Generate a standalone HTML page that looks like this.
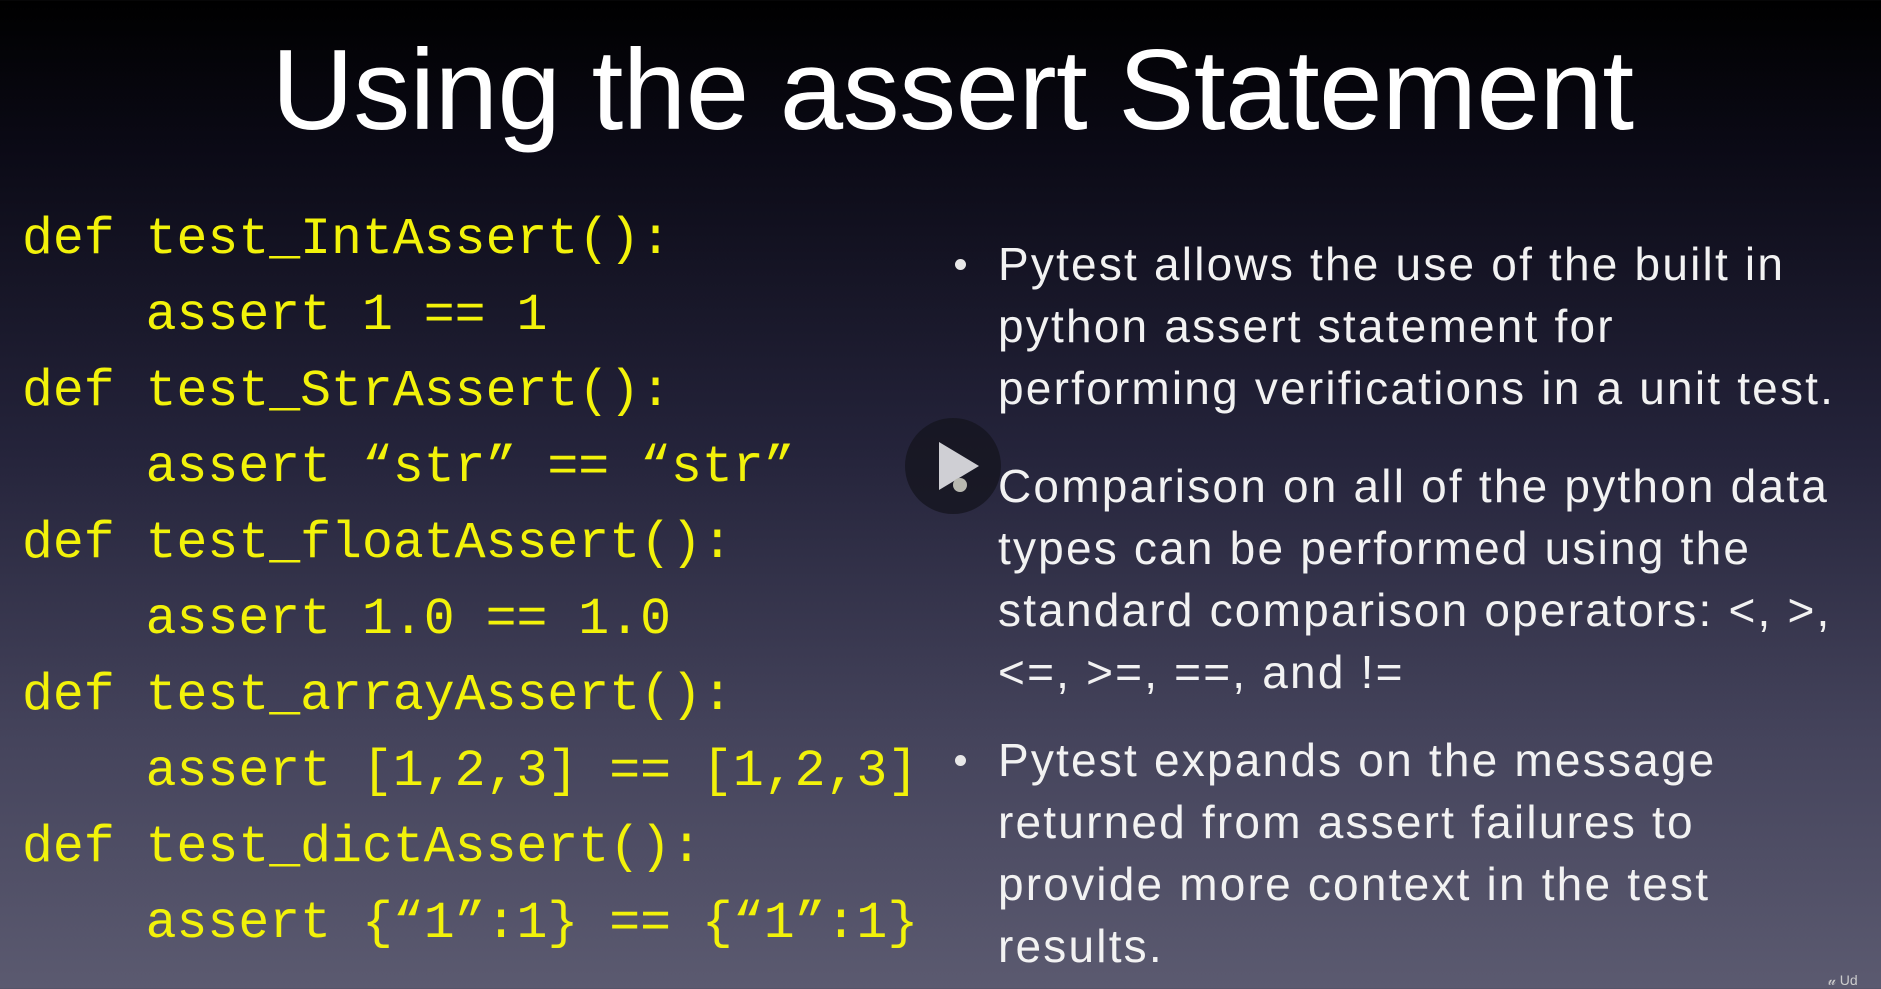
<!DOCTYPE html>
<html><head><meta charset="utf-8"><style>
html,body{margin:0;padding:0}
body{width:1881px;height:989px;overflow:hidden;position:relative;
background:linear-gradient(180deg,#000 0%,#0b0a16 15%,#24233a 45%,#45445c 75%,#5b5a70 100%);
font-family:"Liberation Sans",sans-serif;}
.title{position:absolute;left:0;width:1905px;top:26px;text-align:center;color:#fff;font-size:114px;line-height:130px;letter-spacing:-0.5px}
.code{position:absolute;left:22px;top:202px;font-family:"Liberation Mono","DejaVu Sans Mono",monospace;font-size:51.5px;line-height:76px;color:#f2f20a;white-space:pre;margin:0}
.bul{position:absolute;left:998px;color:#f2f2f2;font-size:46px;line-height:62px;width:900px;letter-spacing:2.2px;white-space:nowrap}
.bul:before{content:"";position:absolute;left:-43px;top:26px;width:11px;height:11px;border-radius:50%;background:#e8e8e8}
.play{position:absolute;left:905px;top:418px;width:96px;height:96px;border-radius:50%;background:rgba(20,20,30,.75)}
.play:after{content:"";position:absolute;left:34px;top:24px;border-left:40px solid #cfcfd4;border-top:24px solid transparent;border-bottom:24px solid transparent}
.dot{position:absolute;left:953px;top:478px;width:14px;height:14px;border-radius:50%;background:#b8b8b0}
.logo{position:absolute;left:1828px;top:972px;color:#ccc;font-size:14px}
</style></head><body>
<div class="title">Using the assert Statement</div>
<pre class="code">def test_IntAssert():
    assert 1 == 1
def test_StrAssert():
    assert “str” == “str”
def test_floatAssert():
    assert 1.0 == 1.0
def test_arrayAssert():
    assert [1,2,3] == [1,2,3]
def test_dictAssert():
    assert {“1”:1} == {“1”:1}</pre>
<div class="bul" style="top:233px">Pytest allows the use of the built in<br>python assert statement for<br>performing verifications in a unit test.</div>
<div class="bul" style="top:455px">Comparison on all of the python data<br>types can be performed using the<br>standard comparison operators: &lt;, &gt;,<br>&lt;=, &gt;=, ==, and !=</div>
<div class="bul" style="top:729px">Pytest expands on the message<br>returned from assert failures to<br>provide more context in the test<br>results.</div>
<div class="play"></div><div class="dot"></div>
<div class="logo">𝓊 Ud</div>
</body></html>
